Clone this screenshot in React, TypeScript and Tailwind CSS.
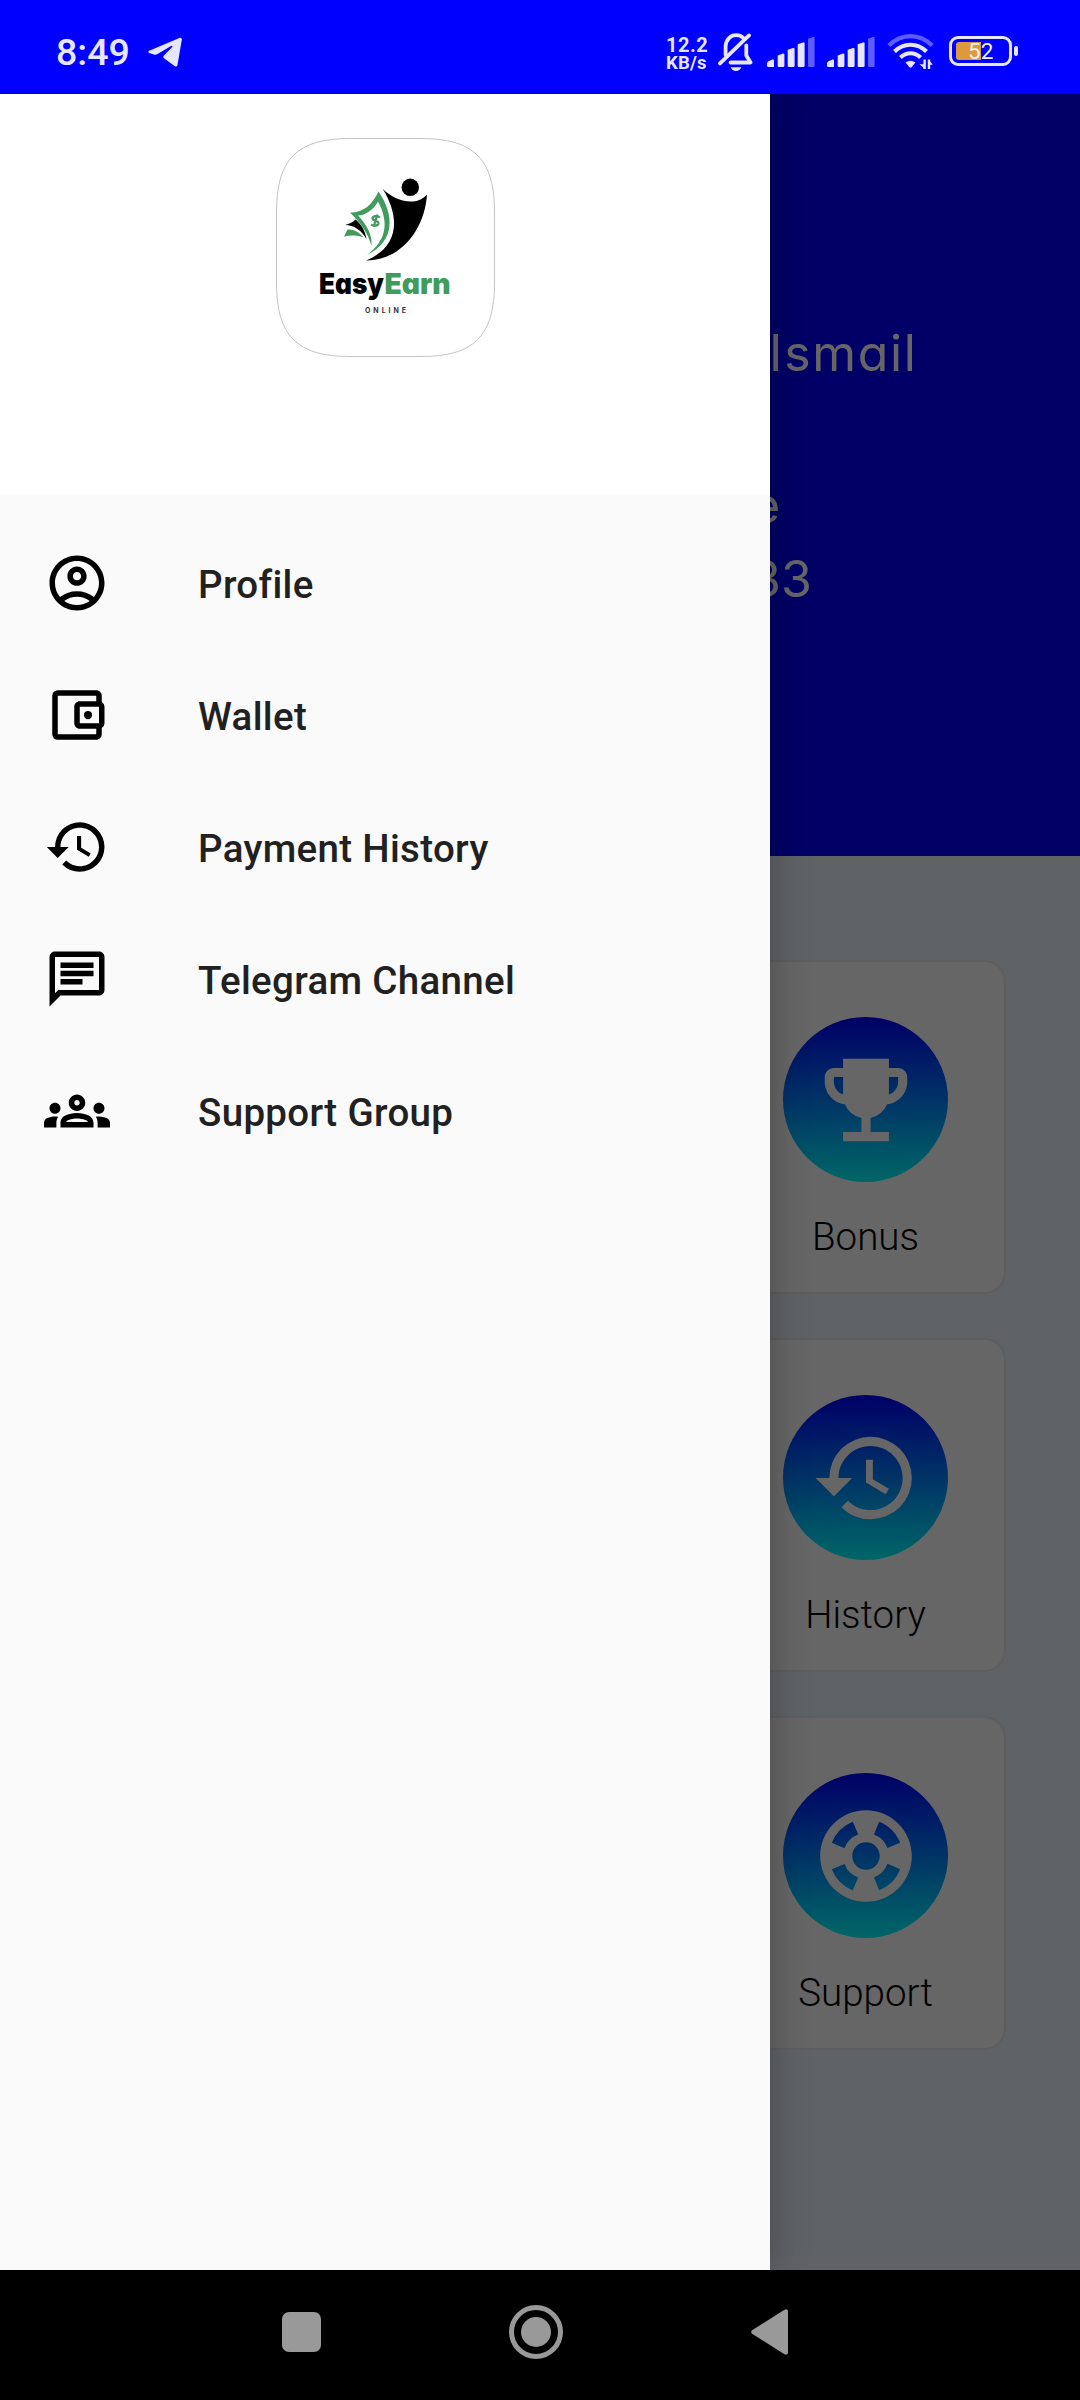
import type { ComponentType } from "react";
import {
  MdEmojiEvents,
  MdHistory,
  MdOutlineAccountBalanceWallet,
  MdOutlineAccountCircle,
  MdOutlineChat,
  MdOutlineGroups,
  MdSupport,
} from "react-icons/md";

type Icon = ComponentType<{ className?: string }>;

const menu: { label: string; icon: Icon }[] = [
  { label: "Profile", icon: MdOutlineAccountCircle },
  { label: "Wallet", icon: MdOutlineAccountBalanceWallet },
  { label: "Payment History", icon: MdHistory },
  { label: "Telegram Channel", icon: MdOutlineChat },
  { label: "Support Group", icon: MdOutlineGroups },
];

const tiles: { label: string; icon: Icon }[] = [
  { label: "Bonus", icon: MdEmojiEvents },
  { label: "History", icon: MdHistory },
  { label: "Support", icon: MdSupport },
];

function Signal() {
  return (
    <svg className="h-[30px] w-12" viewBox="0 0 48 30" fill="#e6e6ff">
      <path d="M0 30V26.5Q0 25 1.4 24.3L5.5 22.6Q7 22 7 23.5V30Q7 30 5.5 30H1.5Q0 30 0 29Z" />
      <path d="M10.7 18.4L16 16.6Q17.4 16.2 17.4 17.6V28.5Q17.4 30 16 30H12Q10.7 30 10.7 28.5Z" />
      <path d="M20.7 12.8L26 11Q27.6 10.6 27.6 12V28.5Q27.6 30 26.2 30H22Q20.7 30 20.7 28.5Z" />
      <path d="M30.7 7.2L36 5.4Q37.6 5 37.6 6.4V28.5Q37.6 30 36.2 30H32Q30.7 30 30.7 28.5Z" />
      <path opacity=".4" d="M41 1.8L46 .1Q47.6-.4 47.6 1V28.5Q47.6 30 46.2 30H42.3Q41 30 41 28.5Z" />
    </svg>
  );
}

function StatusBar() {
  return (
    <header className="relative z-20 flex h-[94px] items-start bg-[#0000ff] text-[#e6e6ff]">
      <span className="mt-[30px] ml-14 w-[92px] text-[37.5px] leading-[44px] font-medium">8:49</span>
      <svg className="mt-[37px] h-[30px] w-[34px]" viewBox="0 0 34 30" fill="currentColor">
        <path d="M1.2 13.8L31.4.9Q34 .2 33.8 2.8L29.5 28Q28.8 30.4 26.6 29L16.3 21.6Q14.4 20 16.2 18.2L24.2 10Q25.2 8.2 23 9L9.6 17Q7.6 18 5.8 17.4L1.2 16Q-.6 15 1.2 13.8Z" />
      </svg>
      <div className="mt-[36px] ml-[484px] flex w-[46px] flex-col font-bold whitespace-nowrap">
        <span className="text-[20px] leading-[18px] tracking-[0.5px]">12.2</span>
        <span className="text-[18.5px] leading-[18px] tracking-[0.2px]">KB/s</span>
      </div>
      <svg className="mt-[32px] ml-[6px] h-10 w-9" viewBox="0 0 36 40" fill="none" stroke="currentColor" strokeWidth="3.8" strokeLinecap="round" strokeLinejoin="round">
        <path d="M7.6 23V14.5C8 7 12.8 3.2 18 3.2C21 3.2 23.6 4.2 25.4 6" />
        <path d="M2 31.4L31 3.4" />
        <path d="M28.3 13.5V23.5L32.6 30.5H12.5" />
        <path d="M12.5 35.3H23.5Q21.8 39 18 39T12.5 35.3Z" fill="currentColor" stroke="none" />
      </svg>
      <div className="mt-[37px] ml-[13px] flex gap-3">
        <Signal />
        <Signal />
      </div>
      <svg className="mt-[34px] ml-[12px] h-9 w-[47px]" viewBox="0 0 47 36" fill="none" stroke="currentColor" strokeWidth="4.2">
        <path d="M1.8 11.6C14.5-1 32.5-1 45.2 11.6" opacity=".4" />
        <path d="M7.5 17.5C17 8.5 30 8.5 39.5 17.5" />
        <path d="M13.4 23.6C19.4 17.8 27.6 17.8 33.6 23.6" />
        <path d="M18.6 28.4Q23.5 25 28.4 28.4L24.8 33Q23.5 34.6 22.2 33Z" fill="currentColor" stroke="none" />
        <path d="M37.6 25.5V35M42 35V25.5" strokeWidth="2.4" />
        <path d="M32.5 30.3L38 35V30.3ZM45.8 30.7L41.5 25.5V30.7Z" fill="currentColor" stroke="none" />
      </svg>
      <div className="mt-[36px] ml-[15px] flex items-center gap-[2px]">
        <div className="relative flex h-[30px] w-[63px] items-center rounded-[9px] border-3 border-[#e6e6ff] pl-[4px]">
          <div className="h-[18px] w-[25px] rounded-l-[3px] bg-[#dd9a3c]" />
          <span className="absolute left-[16px] text-[22.5px] leading-[26px] text-[#f4f0f4]">52</span>
        </div>
        <div className="h-[10px] w-[4px] rounded-[2px] bg-[#e6e6ff]" />
      </div>
    </header>
  );
}

function Logo() {
  return (
    <svg className="h-[219px] w-[219px]" viewBox="0 0 219 219">
      <path
        d="M.5 74C.5 21 21 .5 74 .5H145C198 .5 218.5 21 218.5 74V145C218.5 198 198 218.5 145 218.5H74C21 218.5 .5 198 .5 145Z"
        fill="#fff"
        stroke="#c4c4c4"
      />
      <circle cx="134.3" cy="49.3" r="8.7" />
      <path d="M106.5 50.5C117 62 139 70 151 56.5C149 88 128 122 90 122.5C121 110 126 82 106.5 50.5Z" />
      <path
        fill="#3f9c5c"
        fillRule="evenodd"
        d="M102.5 53.5C118 76 120 103 91 117C111 102 113 84 102 63.5C97 73 88 77.5 82 77.5C91 87 96.5 97 95.5 108C92 95 84 84 74 74.5C87 75 96 67 102.5 53.5Z"
      />
      <path d="M69 87C74 86 77 84 79.5 81.5C86 87 89 93 90.5 101C85 92 78 87 69 87Z" />
      <path d="M68 98.5L71.5 91.5C79 91 84 95 87.5 99.5C81 97 75 97 68 98.5Z" fill="#3f9c5c" />
      <path
        d="M104 79.5C101 77 96.5 78 96.5 80.5C96.5 83.5 103 82 102.5 85.5C102 88 97.5 88.5 95 86.500M101.500 76.500L97.500 89"
        fill="none"
        stroke="#3f9c5c"
        strokeWidth="2.2"
      />
      <g fontSize="28.5" fontWeight="900" className="font-[Inter,sans-serif] [font-feature-settings:'cv11']">
        <text x="43" y="155.500" textLength="65" lengthAdjust="spacingAndGlyphs">Easy</text>
        <text x="108.500" y="155.500" textLength="66" lengthAdjust="spacingAndGlyphs" fill="#3f9c5c">Earn</text>
      </g>
      <text x="89" y="175" fontSize="7" fontWeight="700" fill="#333" textLength="41" className="font-[Inter,sans-serif]">ONLINE</text>
    </svg>
  );
}

function Drawer() {
  return (
    <aside className="absolute inset-y-0 left-0 z-10 w-[770px] bg-[#fafafa] shadow-[0_0_36px_rgba(0,0,0,0.28)]">
      <div className="flex h-[401px] justify-center bg-white pt-[44px]">
        <Logo />
      </div>
      <nav className="flex flex-col pt-[22px]">
        {menu.map(({ label, icon: Glyph }) => (
          <div key={label} className="flex h-[132px] items-center pl-11">
            <Glyph className="size-[66px] text-black" />
            <span className="ml-[88px] pt-[5px] text-[38.5px] leading-none font-medium tracking-[0.33px] text-[#212121]">{label}</span>
          </div>
        ))}
      </nav>
    </aside>
  );
}

function Home() {
  return (
    <main className="flex h-full flex-col bg-[#edf7fc]">
      <section className="flex h-[762px] flex-col bg-[#0000ff] pt-[222px] pl-[769px] font-[Inter,sans-serif] text-[50px] leading-[74px] font-normal text-white [font-feature-settings:'cv11']">
        <span className="tracking-[1.7px]">Ismail</span>
        <span className="mt-[78px] -ml-[18px]">e</span>
        <span className="-ml-[19px]">33</span>
      </section>
      <section className="flex flex-col items-end gap-[44px] pt-[104px] pr-[74px]">
        {tiles.map(({ label, icon: Glyph }) => (
          <article key={label} className="flex h-[334px] w-[281px] flex-col items-center rounded-[22px] border-2 border-[#ede8e8] bg-white pt-[55px]">
            <div className="flex size-[165px] items-center justify-center rounded-full bg-[linear-gradient(180deg,#0000ff,#00ffff)]">
              <Glyph className="size-[110px] text-white" />
            </div>
            <span className="mt-8 text-[38.5px] leading-[46px] font-light text-black">{label}</span>
          </article>
        ))}
      </section>
    </main>
  );
}

function NavBar() {
  return (
    <footer className="relative z-20 flex h-[130px] items-center bg-black pb-[6px] pl-[282px]">
      <div className="h-10 w-[39px] rounded-[7px] bg-[#999999]" />
      <div className="ml-[188px] flex size-[54px] items-center justify-center rounded-full border-[5px] border-[#999999]">
        <div className="size-[30px] rounded-full bg-[#999999]" />
      </div>
      <svg className="ml-[188px] h-[46px] w-[37px]" viewBox="0 0 37 46" fill="#999">
        <path d="M1 21.2L33.5.8Q37-.6 37 2.5V43.5Q37 46.6 33.5 45.2L1 24.8Q-.6 23 1 21.2Z" />
      </svg>
    </footer>
  );
}

export default function App() {
  return (
    <div className="flex h-[2400px] w-[1080px] flex-col overflow-hidden font-[Roboto,sans-serif]">
      <StatusBar />
      <div className="relative h-[2176px] overflow-hidden">
        <Home />
        <div className="absolute inset-0 bg-black/60" />
        <Drawer />
      </div>
      <NavBar />
    </div>
  );
}
